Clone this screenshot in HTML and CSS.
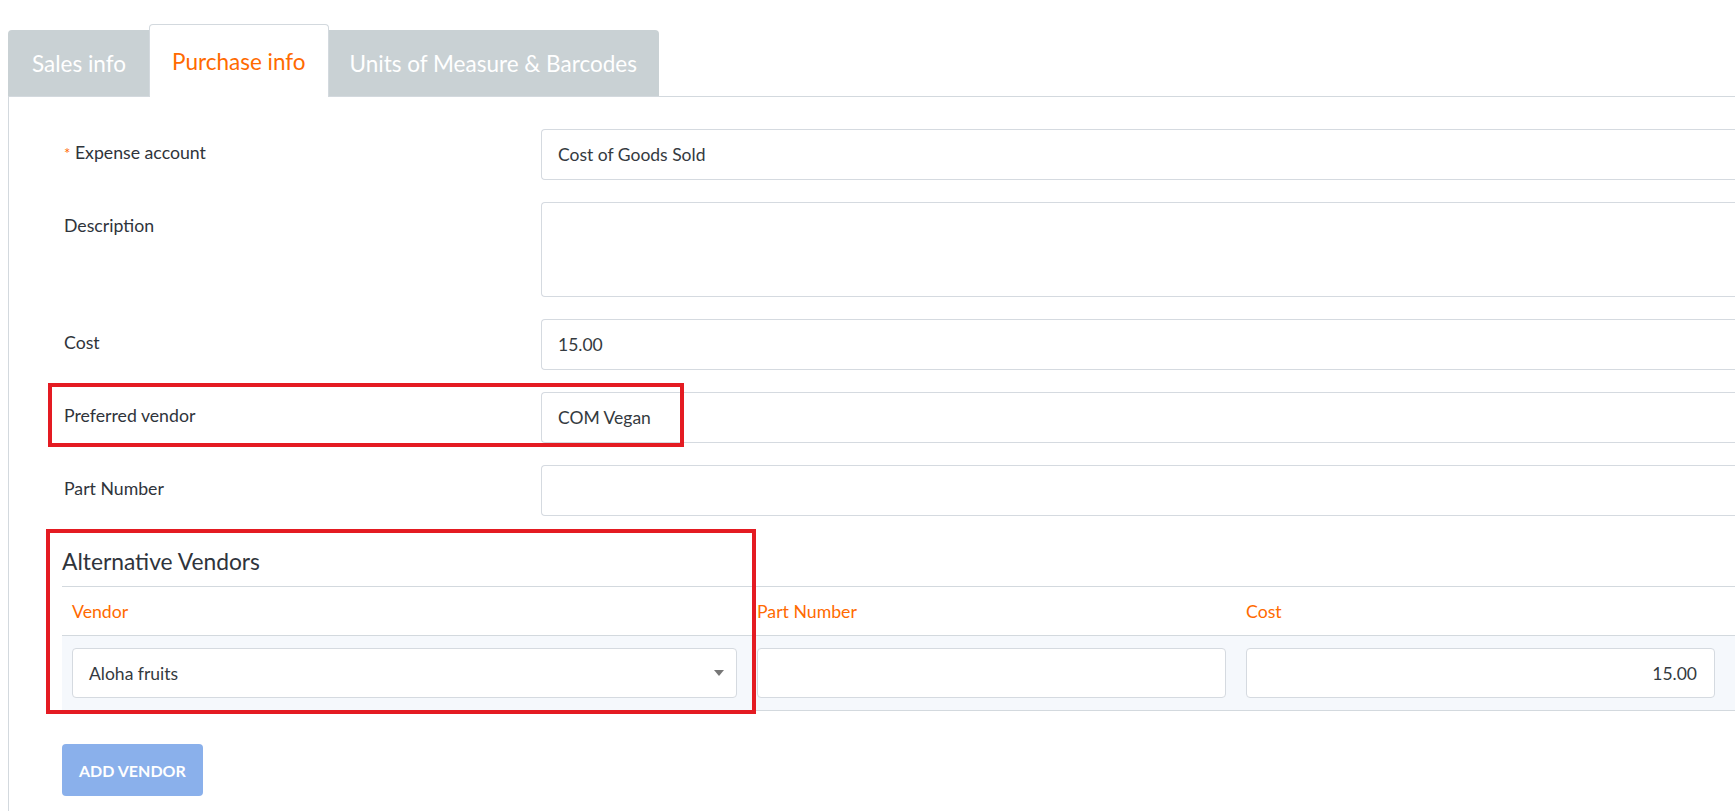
FILE: index.html
```html
<!DOCTYPE html>
<html lang="en">
<head>
    <meta charset="UTF-8">
    <title>Item - Purchase info</title>
    <link rel="stylesheet" href="styles.css">
</head>
<body>
    <div class="page">
        <div class="tabs">
            <div class="tab">Sales info</div>
            <div class="tab active">Purchase info</div>
            <div class="tab">Units of Measure &amp; Barcodes</div>
        </div>

        <div class="panel">
            <div class="form-row">
                <label><span class="required">*</span> Expense account</label>
                <div class="field">Cost of Goods Sold</div>
            </div>
            <div class="form-row">
                <label>Description</label>
                <div class="field textarea"></div>
            </div>
            <div class="form-row">
                <label>Cost</label>
                <div class="field">15.00</div>
            </div>
            <div class="form-row">
                <label>Preferred vendor</label>
                <div class="field">COM Vegan</div>
            </div>
            <div class="form-row">
                <label>Part Number</label>
                <div class="field"></div>
            </div>

            <div class="vendors">
                <h2>Alternative Vendors</h2>
                <div class="vendor-table">
                    <div class="th">Vendor</div>
                    <div class="th">Part Number</div>
                    <div class="th">Cost</div>
                    <div class="th"></div>

                    <div class="td">
                        <div class="field select">Aloha fruits <span class="caret"></span></div>
                    </div>
                    <div class="td"><div class="field"></div></div>
                    <div class="td"><div class="field number">15.00</div></div>
                    <div class="td"></div>
                </div>
                <button class="add-button">ADD VENDOR</button>
            </div>
        </div>

        <!-- highlight boxes drawn over the form -->
        <div class="highlight box-vendor"></div>
        <div class="highlight box-alt"></div>
    </div>
</body>
</html>
```

FILE: styles.css
```css
/* base */
body {
    margin: 0;
    padding: 0;
    font-family: Lato, "Open Sans", sans-serif;
    color: #343a40;
    background: #ffffff;
    overflow: hidden;
}

.page {
    position: relative;
    padding: 24px 0 0 8px;
}

/* tabs */
.tabs {
    display: flex;
    align-items: flex-end;
    height: 72px;
}

.tab {
    height: 66px;
    box-sizing: border-box;
    padding: 0 23px 0 24px;
    display: flex;
    align-items: center;
    background: #c9d1d4;
    color: #ffffff;
    font-size: 22.5px;
}

.tab:first-child {
    border-radius: 4px 0 0 0;
}

.tab:last-child {
    border-radius: 0 4px 0 0;
    padding: 0 22px 0 21px;
}

.tab.active {
    height: 73px;
    margin-bottom: -1px;
    padding: 0 22px;
    background: #ffffff;
    color: #ff6a00;
    border: 1px solid #d3d9de;
    border-bottom: none;
    border-radius: 4px 4px 0 0;
    position: relative;
    z-index: 1;
}

/* panel */
.panel {
    border-top: 1px solid #d3d9de;
    border-left: 1px solid #d3d9de;
    padding: 32px 0 40px 55px;
}

.form-row {
    display: grid;
    grid-template-columns: 477px 1fr;
    margin-bottom: 22px;
}

.form-row label {
    font-size: 17.7px;
    line-height: 24px;
    padding-top: 12px;
    color: #2f343b;
}

.required {
    color: #ff6a00;
    font-size: 15px;
    vertical-align: top;
}

.field {
    height: 51px;
    box-sizing: border-box;
    border: 1px solid #d5dae0;
    border-radius: 4px;
    padding: 0 16px;
    display: flex;
    align-items: center;
    font-size: 17.5px;
    color: #343a40;
    background: #ffffff;
}

/* the form inputs run off the right edge of the window */
.form-row .field {
    border-right: none;
    border-radius: 4px 0 0 4px;
}

.field.textarea {
    height: 95px;
}

/* alternative vendors */
.vendors {
    margin-left: -2px;
}

.vendors h2 {
    margin: 30px 0 10px;
    font-size: 22.8px;
    line-height: 30px;
    font-weight: 400;
    color: #2f343b;
}

.vendor-table {
    display: grid;
    grid-template-columns: 685px 489px 489px 1fr;
    border-top: 1px solid #d3d9de;
}

.th {
    height: 48px;
    padding: 0 10px;
    display: flex;
    align-items: center;
    color: #ff6a00;
    font-size: 17.7px;
    border-bottom: 1px solid #d3d9de;
}

.td {
    padding: 12px 10px;
    background: #f5f8fc;
    border-bottom: 1px solid #d3d9de;
}

.td:first-of-type {
    padding-left: 12px;
}

.td .field {
    height: 50px;
}

.field.select {
    justify-content: space-between;
}

.caret {
    width: 0;
    height: 0;
    border-left: 5px solid transparent;
    border-right: 5px solid transparent;
    border-top: 6px solid #777;
    margin-right: -4px;
}

.field.number {
    justify-content: flex-end;
    padding-right: 17px;
}

.add-button {
    margin-top: 33px;
    height: 52px;
    padding: 0 17px;
    border: none;
    border-radius: 4px;
    background: #8ab0eb;
    color: #ffffff;
    font-family: inherit;
    font-size: 16px;
    font-weight: 700;
}

/* red highlight overlays */
.highlight {
    position: absolute;
    border: 4px solid #e41b22;
    box-sizing: border-box;
}

.box-vendor {
    left: 48px;
    top: 383px;
    width: 636px;
    height: 64px;
}

.box-alt {
    left: 46px;
    top: 529px;
    width: 710px;
    height: 185px;
}
```
